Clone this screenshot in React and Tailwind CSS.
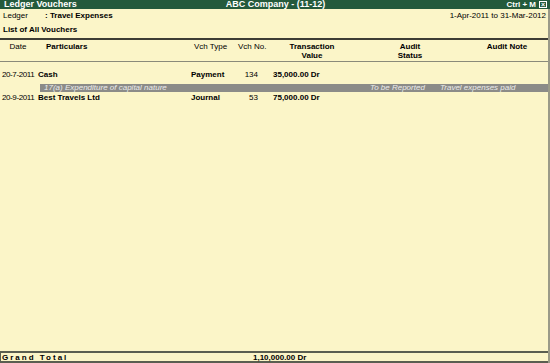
import React from "react";

const rows = [
  {
    date: "20-7-2011",
    party: "Cash",
    type: "Payment",
    no: "134",
    value: "35,000.00 Dr",
    note: {
      text: "17(a) Expenditure of capital nature",
      status: "To be Reported",
      remark: "Travel expenses paid",
    },
  },
  {
    date: "20-9-2011",
    party: "Best Travels Ltd",
    type: "Journal",
    no: "53",
    value: "75,000.00 Dr",
  },
];

const App = () => {
  return (
    <div className="w-[550px] h-[363px] bg-[#fbf5c8] flex flex-col text-[8px] leading-[9px] text-black font-['Tahoma','Liberation_Sans',sans-serif] overflow-hidden whitespace-nowrap">
      {/* Title bar */}
      <div className="h-[9px] bg-[#245a3c] flex items-center text-white font-bold text-[9px] leading-[9px] pl-[4px] pr-[3px] shrink-0">
        <span className="w-[120px]">Ledger Vouchers</span>
        <span className="flex-1 text-center">ABC Company - (11-12)</span>
        <span className="w-[120px] flex items-center justify-end gap-[3px] text-[8px]">
          Ctrl + M
          <span className="w-[8px] h-[7px] border border-white text-[7px] leading-[5px] text-center">×</span>
        </span>
      </div>

      <div className="flex-1 flex flex-col border-r-2 border-[#9a9a88]">
        {/* Ledger line */}
        <div className="flex items-center pt-[1px] h-[11px] pl-[3px] pr-[2px]">
          <span className="w-[42px]">Ledger</span>
          <span className="font-bold">: Travel Expenses</span>
          <span className="ml-auto">1-Apr-2011 to 31-Mar-2012</span>
        </div>
        <div className="h-[15px] flex items-end pl-[3px] font-bold pb-[1px]">List of All Vouchers</div>

        {/* Column header */}
        <div className="mt-[3px] border-t-2 border-[#3d3d35] flex pt-[2px] pb-[1px] border-b border-b-[#8a8a7a]">
          <div className="w-[36px] text-center">Date</div>
          <div className="w-[152px] pl-[10px] font-bold">Particulars</div>
          <div className="w-[47px] pl-[6px]">Vch Type</div>
          <div className="w-[35px] pl-[3px]">Vch No.</div>
          <div className="w-[84px] text-center font-bold">
            Transaction
            <br />
            Value
          </div>
          <div className="w-[112px] text-center font-bold">
            Audit
            <br />
            Status
          </div>
          <div className="flex-1 text-center font-bold">Audit Note</div>
        </div>

        {/* Rows */}
        <div className="pt-[7px] flex flex-col">
          {rows.map((r) => (
            <div key={r.date} className="flex flex-col">
              <div className="flex h-[10px] items-center">
                <div className="w-[38px] pl-[2px] tracking-[-0.4px]">{r.date}</div>
                <div className="w-[153px] font-bold">{r.party}</div>
                <div className="w-[47px] font-bold">{r.type}</div>
                <div className="w-[20px] text-right">{r.no}</div>
                <div className="pl-[15px] font-bold">{r.value}</div>
              </div>
              {r.note && (
                <div className="ml-[40px] mt-[5px] h-[8px] bg-[#8b8b88] flex items-center italic text-[#ececec] text-[8px] leading-[8px]">
                  <span className="w-[330px] pl-[4px]">{r.note.text}</span>
                  <span className="w-[70px]">{r.note.status}</span>
                  <span>{r.note.remark}</span>
                </div>
              )}
            </div>
          ))}
        </div>

        <div className="flex-1" />

        {/* Grand total */}
        <div className="h-[12px] border-t-2 border-[#5a5e50] border-b-2 border-b-[#5a5e50] border-l border-l-[#5a5e50] flex items-center font-bold">
          <div className="w-[252px] pl-[1px] tracking-[2px]">Grand Total</div>
          <div>1,10,000.00 Dr</div>
        </div>
      </div>
    </div>
  );
};

export default App;
